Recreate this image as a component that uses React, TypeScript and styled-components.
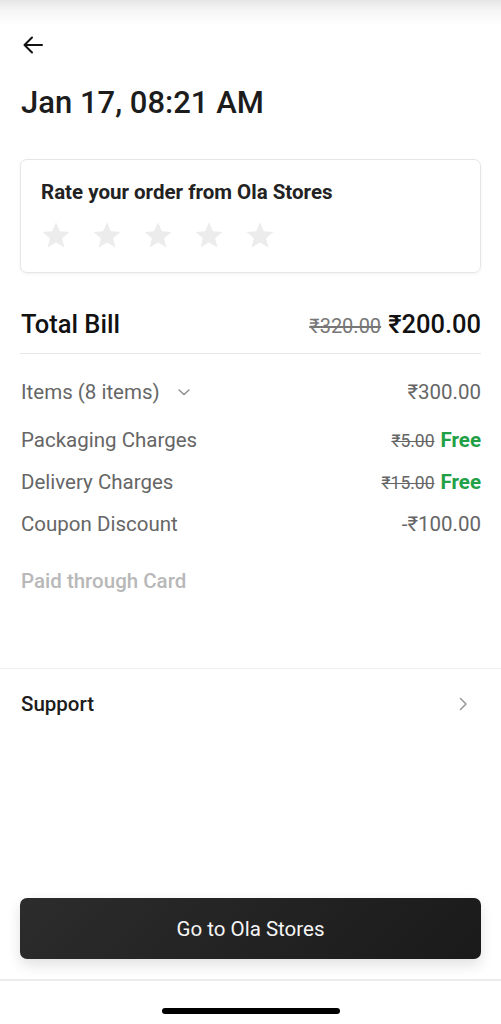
import React, { FC } from 'react';
import styled, { createGlobalStyle } from 'styled-components';

const GlobalStyle = createGlobalStyle`
  html, body {
    margin: 0;
    padding: 0;
    background: #ffffff;
  }
  body {
    font-family: Roboto, 'Noto Sans', sans-serif;
    color: #1a1a1a;
    -webkit-font-smoothing: antialiased;
  }
`;

type Charge = {
  label: string;
  old?: string;
  value: string;
  free?: boolean;
};

const charges: Charge[] = [
  { label: 'Packaging Charges', old: '₹5.00', value: 'Free', free: true },
  { label: 'Delivery Charges', old: '₹15.00', value: 'Free', free: true },
  { label: 'Coupon Discount', value: '-₹100.00' },
];

const Star: FC = () => (
  <svg width="30" height="30" viewBox="0 0 24 24">
    <path
      d="M12 1.8l3.1 7.1 7.6.6-5.8 5 1.8 7.5L12 18l-6.7 4 1.8-7.5-5.8-5 7.6-.6z"
      fill="#ececec"
    />
  </svg>
);

export const App: FC = () => {
  return (
    <Page>
      <GlobalStyle />
      <TopShade />
      <BackButton aria-label="Back">
        <svg width="24" height="24" viewBox="0 0 24 24" fill="none">
          <path
            d="M21 12H3.5M11 4.5L3.5 12l7.5 7.5"
            stroke="#111"
            strokeWidth="2"
            strokeLinecap="round"
            strokeLinejoin="round"
          />
        </svg>
      </BackButton>
      <Title>Jan 17, 08:21 AM</Title>

      <RateCard>
        <RateTitle>Rate your order from Ola Stores</RateTitle>
        <Stars>
          {[0, 1, 2, 3, 4].map((i) => (
            <Star key={i} />
          ))}
        </Stars>
      </RateCard>

      <TotalRow>
        <TotalLabel>Total Bill</TotalLabel>
        <TotalValues>
          <TotalOld>₹320.00</TotalOld>
          <TotalNow>₹200.00</TotalNow>
        </TotalValues>
      </TotalRow>
      <Divider />

      <Breakdown>
        <Row>
          <ItemsLabel>
            Items (8 items)
            <svg width="16" height="16" viewBox="0 0 16 16" fill="none">
              <path
                d="M3 6l5 4.5L13 6"
                stroke="#8a8a8a"
                strokeWidth="1.4"
                strokeLinecap="round"
                strokeLinejoin="round"
              />
            </svg>
          </ItemsLabel>
          <Amount>₹300.00</Amount>
        </Row>
        {charges.map(({ label, old, value, free }) => (
          <Row key={label}>
            <RowLabel>{label}</RowLabel>
            <Amounts>
              {old && <OldAmount>{old}</OldAmount>}
              <Amount $free={free}>{value}</Amount>
            </Amounts>
          </Row>
        ))}
      </Breakdown>

      <PaidNote>Paid through Card</PaidNote>

      <FullDivider />

      <SupportRow>
        <SupportLabel>Support</SupportLabel>
        <svg width="16" height="16" viewBox="0 0 16 16" fill="none">
          <path
            d="M5.5 2.5L11 8l-5.5 5.5"
            stroke="#9a9a9a"
            strokeWidth="1.6"
            strokeLinecap="round"
            strokeLinejoin="round"
          />
        </svg>
      </SupportRow>

      <Footer>
        <PrimaryButton>Go to Ola Stores</PrimaryButton>
      </Footer>
      <HomeBar>
        <HomeIndicator />
      </HomeBar>
    </Page>
  );
};

const Page = styled.div`
  display: flex;
  flex-direction: column;
  width: 501px;
  height: 1024px;
  overflow: hidden;
`;

const TopShade = styled.div`
  height: 26px;
  background: linear-gradient(#e6e6e6, #f6f6f6 40%, #ffffff);
`;

const BackButton = styled.div`
  display: flex;
  align-items: center;
  margin: 7px 0 0 21px;
  width: 24px;
  height: 24px;
`;

const Title = styled.h1`
  margin: 28px 0 0 21px;
  font-size: 31px;
  line-height: 36px;
  font-weight: 500;
  color: #1c1c1c;
`;

const RateCard = styled.div`
  margin: 38px 20px 0;
  height: 114px;
  box-sizing: border-box;
  border: 1px solid #e6e6e6;
  border-radius: 7px;
  box-shadow: 0 1px 3px rgba(0, 0, 0, 0.06);
  padding: 20px 20px 0;
`;

const RateTitle = styled.div`
  font-size: 20.5px;
  line-height: 24px;
  font-weight: 700;
  color: #222;
`;

const Stars = styled.div`
  display: flex;
  gap: 21px;
  margin-top: 16px;
`;

const TotalRow = styled.div`
  display: flex;
  justify-content: space-between;
  align-items: center;
  margin: 36px 20px 0 21px;
  height: 30px;
`;

const TotalLabel = styled.div`
  font-size: 25.5px;
  font-weight: 500;
  color: #111;
`;

const TotalValues = styled.div`
  display: flex;
  align-items: baseline;
  gap: 7px;
`;

const TotalOld = styled.span`
  font-size: 20px;
  color: #777;
  text-decoration: line-through;
`;

const TotalNow = styled.span`
  font-size: 25.5px;
  font-weight: 500;
  color: #111;
`;

const Divider = styled.div`
  margin: 14px 20px 0;
  height: 1px;
  background: #e8e8e8;
`;

const Breakdown = styled.div`
  display: flex;
  flex-direction: column;
  margin: 26px 20px 0 21px;
`;

const Row = styled.div`
  display: flex;
  justify-content: space-between;
  align-items: center;
  height: 24px;
  margin-bottom: 18px;

  &:first-child {
    margin-bottom: 24px;
  }
`;

const RowLabel = styled.div`
  font-size: 20.5px;
  color: #666;
`;

const ItemsLabel = styled(RowLabel)`
  display: flex;
  align-items: center;
  gap: 16px;
`;

const Amounts = styled.div`
  display: flex;
  align-items: baseline;
  gap: 6px;
`;

const OldAmount = styled.span`
  font-size: 17.5px;
  color: #666;
  text-decoration: line-through;
`;

const Amount = styled.span<{ $free?: boolean }>`
  font-size: 20.5px;
  font-weight: ${(p) => (p.$free ? 700 : 400)};
  color: ${(p) => (p.$free ? '#22a046' : '#666')};
`;

const PaidNote = styled.div`
  margin: 15px 0 0 21px;
  font-size: 20.5px;
  font-weight: 500;
  color: #b8b8b8;
`;

const FullDivider = styled.div`
  margin-top: 75px;
  height: 1px;
  background: #efefef;
`;

const SupportRow = styled.div`
  display: flex;
  justify-content: space-between;
  align-items: center;
  margin: 22px 30px 0 21px;
  height: 26px;
`;

const SupportLabel = styled.div`
  font-size: 20.5px;
  font-weight: 500;
  color: #1c1c1c;
`;

const Footer = styled.div`
  margin-top: auto;
  padding: 0 20px 20px;
`;

const PrimaryButton = styled.button`
  display: block;
  width: 100%;
  height: 61px;
  border: none;
  border-radius: 7px;
  background: linear-gradient(135deg, #2c2c2c, #1a1a1a);
  box-shadow: 0 6px 14px rgba(0, 0, 0, 0.12);
  color: #f5f5f5;
  font-family: Roboto, 'Noto Sans', sans-serif;
  font-size: 20.5px;
  font-weight: 400;
`;

const HomeBar = styled.div`
  display: flex;
  justify-content: center;
  align-items: flex-end;
  height: 45px;
  box-sizing: border-box;
  border-top: 2px solid #ececec;
  padding-bottom: 10px;
`;

const HomeIndicator = styled.div`
  width: 178px;
  height: 6px;
  border-radius: 3px;
  background: #000;
`;

export default App;
